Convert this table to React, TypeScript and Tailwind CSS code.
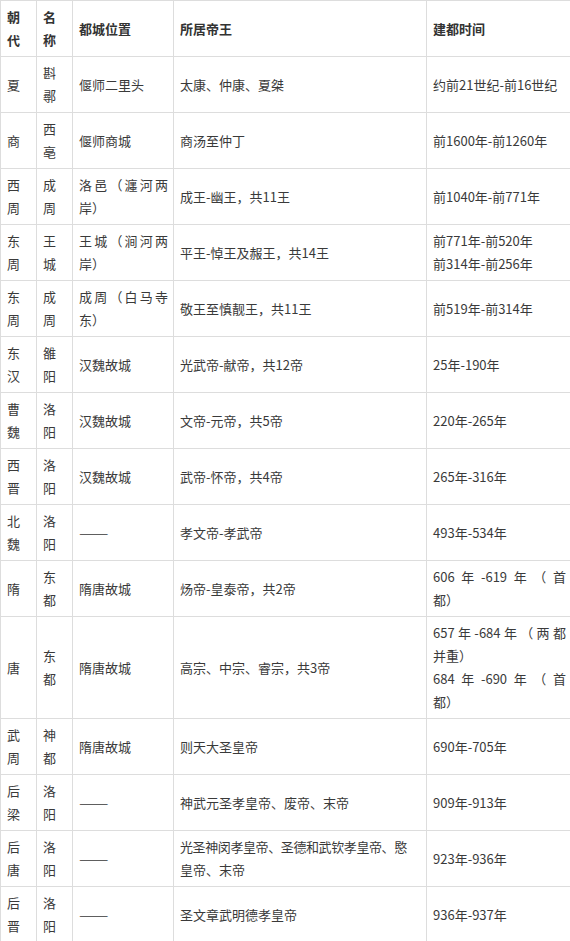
type Line = { t: string; j?: boolean; tight?: boolean };
type Cell = string | Line[];

const J = (t: string): Line => ({ t, j: true });
const L = (t: string): Line => ({ t });

const headers = ["朝代", "名称", "都城位置", "所居帝王", "建都时间"];

const rows: Cell[][] = [
  ["夏", "斟鄩", "偃师二里头", "太康、仲康、夏桀", "约前21世纪-前16世纪"],
  ["商", "西亳", "偃师商城", "商汤至仲丁", "前1600年-前1260年"],
  ["西周", "成周", [J("洛邑（瀍河两"), L("岸）")], "成王-幽王，共11王", "前1040年-前771年"],
  [
    "东周",
    "王城",
    [J("王城（涧河两"), L("岸）")],
    "平王-悼王及赧王，共14王",
    [L("前771年-前520年"), L("前314年-前256年")],
  ],
  ["东周", "成周", [J("成周（白马寺"), L("东）")], "敬王至慎靓王，共11王", "前519年-前314年"],
  ["东汉", "雒阳", "汉魏故城", "光武帝-献帝，共12帝", "25年-190年"],
  ["曹魏", "洛阳", "汉魏故城", "文帝-元帝，共5帝", "220年-265年"],
  ["西晋", "洛阳", "汉魏故城", "武帝-怀帝，共4帝", "265年-316年"],
  ["北魏", "洛阳", "——", "孝文帝-孝武帝", "493年-534年"],
  ["隋", "东都", "隋唐故城", "炀帝-皇泰帝，共2帝", [J("606年-619年（首"), L("都）")]],
  [
    "唐",
    "东都",
    "隋唐故城",
    "高宗、中宗、睿宗，共3帝",
    [J("657年-684年（两都"), L("并重）"), J("684年-690年（首"), L("都）")],
  ],
  ["武周", "神都", "隋唐故城", "则天大圣皇帝", "690年-705年"],
  ["后梁", "洛阳", "——", "神武元圣孝皇帝、废帝、末帝", "909年-913年"],
  [
    "后唐",
    "洛阳",
    "——",
    [{ t: "光圣神闵孝皇帝、圣德和武钦孝皇帝、愍", tight: true }, L("皇帝、末帝")],
    "923年-936年",
  ],
  ["后晋", "洛阳", "——", "圣文章武明德孝皇帝", "936年-937年"],
];

// first two columns are 2 chars stacked one per line
const stacked = (s: string): Line[] => s.split("").map((c) => L(c));

const CellBody = ({ cell }: { cell: Cell }) => {
  if (cell === "——")
    return <span className="inline-block origin-left scale-x-[1.35] tracking-[-1px]">{cell}</span>;
  if (typeof cell === "string") return <span>{cell}</span>;
  return (
    <>
      {cell.map((ln, i) => (
        <span
          key={i}
          className={
            ln.j
              ? "block text-justify [text-align-last:justify]"
              : ln.tight
              ? "block whitespace-nowrap tracking-[-0.4px]"
              : "block"
          }
        >
          {ln.t}
        </span>
      ))}
    </>
  );
};

export default function App() {
  return (
    <div
      className="w-[570px] h-[941px] overflow-hidden bg-white text-[13px] leading-[23px] text-[#3a3a3a]"
      style={{ fontFamily: '"Noto Sans CJK SC", "Noto Sans", sans-serif' }}
    >
      <table className="w-[571px] table-fixed border-collapse">
        <colgroup>
          <col className="w-[36px]" />
          <col className="w-[36px]" />
          <col className="w-[101px]" />
          <col className="w-[253px]" />
          <col className="w-[145px]" />
        </colgroup>
        <thead>
          <tr>
            {headers.map((h, i) => (
              <th
                key={i}
                className="border border-[#dddddd] pl-[6px] pr-[5px] pt-[4px] pb-[5px] text-left align-middle font-bold text-[#333333]"
              >
                <CellBody cell={i < 2 ? stacked(h) : h} />
              </th>
            ))}
          </tr>
        </thead>
        <tbody>
          {rows.map((row, r) => (
            <tr key={r}>
              {row.map((cell, c) => (
                <td
                  key={c}
                  className="border border-[#dddddd] pl-[6px] pr-[5px] pt-[4px] pb-[5px] align-middle"
                >
                  <CellBody
                    cell={c < 2 && typeof cell === "string" ? stacked(cell) : cell}
                  />
                </td>
              ))}
            </tr>
          ))}
        </tbody>
      </table>
    </div>
  );
}
